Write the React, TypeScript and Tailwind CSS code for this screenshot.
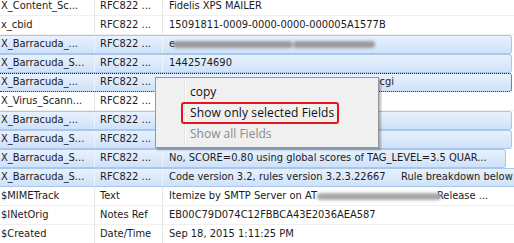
import React from 'react'

interface FieldRow {
  name: string
  type: string
  value: React.ReactNode
  selected?: boolean
  focused?: boolean
  end?: string
}

const Smudge = ({ w, className = '' }: { w: number; className?: string }) => (
  <span
    className={`inline-block h-[7px] rounded-full bg-[#9a9a9a] blur-[1.5px] ${className}`}
    style={{ width: w }}
  />
)

const rows: FieldRow[] = [
  { name: 'X_Content_Sc...', type: 'RFC822 ...', value: 'Fidelis XPS MAILER' },
  { name: 'x_cbid', type: 'RFC822 ...', value: '15091811-0009-0000-0000-000005A1577B' },
  {
    name: 'X_Barracuda_...',
    type: 'RFC822 ...',
    selected: true,
    value: (
      <span className="flex items-center">
        <span>e</span>
        <Smudge w={120} className="-ml-[2px]" />
        <Smudge w={82} className="bg-[#8c8c8c]" />
      </span>
    ),
  },
  { name: 'X_Barracuda_S...', type: 'RFC822 ...', value: '1442574690', selected: true },
  {
    name: 'X_Barracuda_...',
    type: 'RFC822 ...',
    selected: true,
    focused: true,
    value: (
      <span className="flex w-[225px] justify-end overflow-hidden">
        <span className="shrink-0">http://www.barracuda.com/support/search.cgi</span>
      </span>
    ),
  },
  { name: 'X_Virus_Scann...', type: 'RFC822 ...', value: '' },
  { name: 'X_Barracuda_...', type: 'RFC822 ...', value: '', selected: true },
  { name: 'X_Barracuda_S...', type: 'RFC822 ...', value: '', selected: true },
  {
    name: 'X_Barracuda_S...',
    type: 'RFC822 ...',
    selected: true,
    end: 'mr-[8px]',
    value: 'No, SCORE=0.80 using global scores of TAG_LEVEL=3.5 QUAR...',
  },
  {
    name: 'X_Barracuda_S...',
    type: 'RFC822 ...',
    selected: true,
    end: '-mr-[10px]',
    value: (
      <span className="flex">
        <span className="w-[232px] shrink-0">Code version 3.2, rules version 3.2.3.22667</span>
        <span>Rule breakdown below</span>
      </span>
    ),
  },
  {
    name: '$MIMETrack',
    type: 'Text',
    value: (
      <span className="flex items-center">
        <span>Itemize by SMTP Server on AT</span>
        <Smudge w={124} className="bg-[#a8a8a8]" />
        <span className="-ml-[4px]">Release ...</span>
      </span>
    ),
  },
  { name: '$INetOrig', type: 'Notes Ref', value: 'EB00C79D074C12FBBCA43E2036AEA587' },
  { name: '$Created', type: 'Date/Time', value: 'Sep 18, 2015 1:11:25 PM' },
]

function Row({ row }: { row: FieldRow }) {
  const sel = row.selected
  const frame = sel
    ? `rounded-r-[3px] border border-l-0 bg-gradient-to-b from-[#e8f1fd] to-[#cfe2f9] ${
        row.focused ? 'border-dotted border-[#1a1a1a]' : 'border-[#a9c7ec]'
      } ${row.end ?? 'mr-[2px]'}`
    : 'border-b border-[#f0f0f0]'
  const sep = sel ? 'border-r border-[#eef4fc]' : 'border-r border-[#e6e6e6]'

  return (
    <div className={`flex h-[19px] items-center whitespace-nowrap ${frame}`}>
      <div className={`flex h-full w-[95px] shrink-0 items-center pl-[1px] ${sep}`}>{row.name}</div>
      <div className={`flex h-full w-[68px] shrink-0 items-center pl-[5px] ${sep}`}>{row.type}</div>
      <div className="flex h-full min-w-0 flex-1 items-center overflow-hidden pl-[6px]">{row.value}</div>
    </div>
  )
}

function ContextMenu() {
  return (
    <div
      className="absolute left-[155px] top-[77px] h-[71px] w-[224px] border border-[#979797] bg-[#f0f0f0] text-[12px] font-stretch-normal shadow-[2px_2px_2px_rgba(0,0,0,0.28)]"
      style={{ fontFamily: '"Open Sans", "Noto Sans", sans-serif' }}
    >
      <div className="absolute bottom-[2px] left-[28px] top-[2px] w-[2px] border-l border-[#e2e3e3] bg-white" />
      <div className="flex flex-col pt-[3px]">
        <div className="flex h-[21px] items-center pl-[34px] text-[#111]">copy</div>
        <div className="flex h-[21px] items-center pl-[34px] tracking-[0.1px] text-[#111]">Show only selected Fields</div>
        <div className="flex h-[21px] items-center pl-[34px] text-[#8a8a8a]">Show all Fields</div>
      </div>
      <div className="absolute left-[25px] top-[24px] h-[22px] w-[158px] rounded-[3px] border-2 border-[#e8141c]" />
    </div>
  )
}

export default function App() {
  return (
    <div
      className="relative h-[243px] w-[514px] overflow-hidden bg-white text-[11px] text-[#1b1b1b] font-stretch-condensed"
      style={{ fontFamily: '"DejaVu Sans Condensed", "DejaVu Sans", sans-serif' }}
    >
      <div className="-mt-[3px] flex flex-col">
        {rows.map((row, i) => (
          <Row key={i} row={row} />
        ))}
      </div>
      <ContextMenu />
    </div>
  )
}
